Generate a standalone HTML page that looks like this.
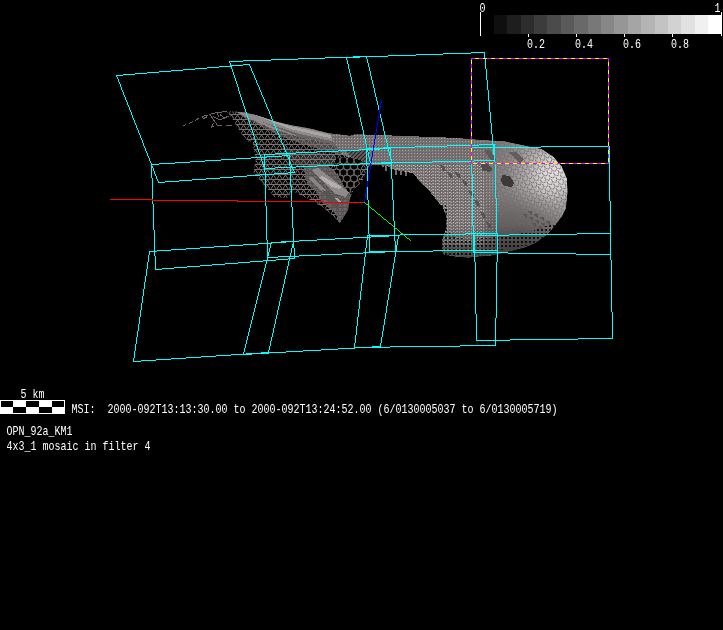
<!DOCTYPE html>
<html lang="en"><head><meta charset="utf-8"><title>MSI mosaic OPN_92a_KM1</title>
<style>html,body{margin:0;padding:0;background:#000;overflow:hidden}svg{display:block;will-change:transform}text{font-family:"Liberation Mono","DejaVu Sans Mono",monospace;fill:#fff;font-size:13px}</style>
</head><body>
<svg width="723" height="630" viewBox="0 0 723 630">
<rect x="0" y="0" width="723" height="630" fill="#000"/>
<g shape-rendering="crispEdges">
<rect x="494" y="15" width="13" height="19" fill="rgb(15,15,15)"/>
<rect x="507" y="15" width="14" height="19" fill="rgb(30,30,30)"/>
<rect x="521" y="15" width="13" height="19" fill="rgb(45,45,45)"/>
<rect x="534" y="15" width="13" height="19" fill="rgb(60,60,60)"/>
<rect x="547" y="15" width="14" height="19" fill="rgb(75,75,75)"/>
<rect x="561" y="15" width="13" height="19" fill="rgb(90,90,90)"/>
<rect x="574" y="15" width="14" height="19" fill="rgb(105,105,105)"/>
<rect x="588" y="15" width="13" height="19" fill="rgb(120,120,120)"/>
<rect x="601" y="15" width="13" height="19" fill="rgb(135,135,135)"/>
<rect x="614" y="15" width="14" height="19" fill="rgb(150,150,150)"/>
<rect x="628" y="15" width="13" height="19" fill="rgb(165,165,165)"/>
<rect x="641" y="15" width="14" height="19" fill="rgb(180,180,180)"/>
<rect x="655" y="15" width="13" height="19" fill="rgb(195,195,195)"/>
<rect x="668" y="15" width="13" height="19" fill="rgb(210,210,210)"/>
<rect x="681" y="15" width="14" height="19" fill="rgb(225,225,225)"/>
<rect x="695" y="15" width="13" height="19" fill="rgb(240,240,240)"/>
<rect x="708" y="15" width="13" height="19" fill="rgb(255,255,255)"/>
<rect x="480" y="12" width="1" height="24" fill="#fff"/>
<rect x="721" y="12" width="1" height="24" fill="#fff"/>
<rect x="528" y="34" width="1" height="3" fill="#fff"/>
<rect x="576" y="34" width="1" height="3" fill="#fff"/>
<rect x="624" y="34" width="1" height="3" fill="#fff"/>
<rect x="672" y="34" width="1" height="3" fill="#fff"/>
</g>
<text x="479.5" y="12" textLength="6" lengthAdjust="spacingAndGlyphs" xml:space="preserve">0</text>
<text x="714.5" y="12" textLength="6" lengthAdjust="spacingAndGlyphs" xml:space="preserve">1</text>
<text x="527.1" y="48" textLength="18" lengthAdjust="spacingAndGlyphs" xml:space="preserve">0.2</text>
<text x="575.1" y="48" textLength="18" lengthAdjust="spacingAndGlyphs" xml:space="preserve">0.4</text>
<text x="623.1" y="48" textLength="18" lengthAdjust="spacingAndGlyphs" xml:space="preserve">0.6</text>
<text x="671.1" y="48" textLength="18" lengthAdjust="spacingAndGlyphs" xml:space="preserve">0.8</text>
<defs>
<pattern id="mA" width="8" height="7" patternUnits="userSpaceOnUse"><path d="M1,5.5H6M3.5,5V2M3.5,2.5L1,0.5M3.5,2.5L6,0.5" stroke="#6e6565" stroke-width="1" fill="none"/></pattern>
<pattern id="mM" width="6" height="5" patternUnits="userSpaceOnUse"><path d="M0,4.5H6M0.5,4.5L3.5,0M3.5,0L6.5,4.5" stroke="#7a7171" stroke-width="1" fill="none"/></pattern>
<pattern id="mD" width="5" height="4" patternUnits="userSpaceOnUse"><path d="M0,3.5H5M0.5,4L2.5,0M2.5,0L4.5,4" stroke="#2a2727" stroke-width="1" fill="none"/></pattern>
<pattern id="sp" width="3" height="3" patternUnits="userSpaceOnUse"><rect x="0" y="0" width="1" height="1" fill="#d8d4d4"/><rect x="2" y="2" width="1" height="1" fill="#4a4646"/></pattern>
<pattern id="sp2" width="4" height="3" patternUnits="userSpaceOnUse"><rect x="1" y="0" width="1" height="1" fill="#eeeaea"/><rect x="3" y="1" width="1" height="1" fill="#e0dcdc"/></pattern>
<pattern id="mL" width="5" height="5" patternUnits="userSpaceOnUse" patternTransform="rotate(-28 548 172)"><path d="M2.5,0V2.5M2.5,2.5L0.5,4.5M2.5,2.5L4.5,4.5M0,4.5H1M4,4.5H5" stroke="#6e6666" stroke-width="1" fill="none"/></pattern>
<pattern id="hx" width="4" height="4" patternUnits="userSpaceOnUse"><path d="M-1,1L1,-1M0,4L4,0M3,5L5,3" stroke="#1e1c1c" stroke-width="1.2" fill="none"/></pattern>
<pattern id="hB" width="4" height="4" patternUnits="userSpaceOnUse"><rect x="1" y="1" width="2" height="2" fill="#000"/></pattern>
<radialGradient id="bulb" gradientUnits="userSpaceOnUse" cx="554" cy="174" r="72"><stop offset="0" stop-color="#e6e4e4"/><stop offset="0.2" stop-color="#d2cfcf"/><stop offset="0.42" stop-color="#aaa6a6"/><stop offset="0.68" stop-color="#8a8585"/><stop offset="1" stop-color="#777171"/></radialGradient>
<radialGradient id="lowsh" gradientUnits="userSpaceOnUse" cx="522" cy="236" r="48"><stop offset="0" stop-color="#3a3737" stop-opacity="0.5"/><stop offset="0.5" stop-color="#3a3737" stop-opacity="0.3"/><stop offset="1" stop-color="#3a3737" stop-opacity="0"/></radialGradient>
<linearGradient id="botfade" gradientUnits="userSpaceOnUse" x1="0" y1="225" x2="0" y2="258"><stop offset="0" stop-color="#000" stop-opacity="0"/><stop offset="0.45" stop-color="#000" stop-opacity="0.25"/><stop offset="1" stop-color="#000" stop-opacity="0.6"/></linearGradient>
<clipPath id="cB"><polygon points="365,134.5 379.8,134.9 404.7,136.1 429.6,136.8 454.9,137.9 479.8,139.9 504.7,141.5 525,145.8 541.7,149.2 553.3,156.7 561.7,166.7 566.7,178.3 567.5,191.7 565.7,208.5 562,216 557.5,222 552,229 545,236 535,243 525.6,247 514.6,250 507.5,251.5 491,255.5 476.5,256.6 468.7,257.6 455,256.5 443.6,254.7 441.6,248.9 442.4,239.5 445.5,230 446.7,218.3 443.3,208.3 436.7,200 430,191.7 420,181.7 413.3,173.3 405,171.7 395,170 386,165.5 374.8,165.2 372,165"/></clipPath>
<clipPath id="cH"><polygon points="336,158 348,157 360,159 361,172 358,184 354,189 350,194 344,186 338,174 334,165"/></clipPath>
<clipPath id="cL"><polygon points="226,111.5 229.7,111.2 244.7,112.4 257.1,115.4 274.6,121.2 289.5,124.9 309.4,128.6 329.3,133.6 350,136.1 354.9,134.4 365,134.5 372,165 369,168 366,172 362,182 354,189 350,198 348,210 340,223.2 334.3,217 324.3,208.3 309.4,199.6 292,190.9 287,198.3 274.6,197.1 263.4,184.6 253.4,172.2 255.9,158.5 252.2,141.1 249,142 241,133.6 232.3,118.7 228,113"/></clipPath>
</defs>
<g shape-rendering="crispEdges">
<path d="M183.5,125.5L186.5,124.5M189,123.5L193,121.5M195.500,120.5L199.500,117.5M202,117.500L205,115L207,115.500L206,117.500L203,118.500M209.500,114.500L217,112.500L227,111.500M210,114.500L217.500,125.500H222M226,125.500H231.500M211,127.500L213.500,123.500M210.500,126L214,126.500M213,116.500L219,119.500L225,118.500M220,114.500L224,117.500L229,116.500M217.500,112.500L218.500,117" stroke="#6e6565" stroke-width="1" fill="none"/>
<g clip-path="url(#cL)">
<rect x="253" y="105" width="125" height="125" fill="url(#mM)"/>
<rect x="220" y="105" width="34" height="45" fill="url(#mM)"/>
<polygon points="232,110 250,111 330,132 352,136 352,158 330,152 305,145 280,136 262,127 245,118" fill="#4c4747"/>
<polygon points="232,110 250,111 330,132 352,136 352,158 330,152 305,145 280,136 262,127 245,118" fill="url(#mM)"/>
<polygon points="234,110 250,111 274.6,120 289.5,124 309.4,128 329.3,133 352,136 352,148 319.4,141.5 294.5,135.5 269.6,127.8 244.7,116.5" fill="#8e8888"/>
<polygon points="250,113 290,126 330,135 352,139 352,141 330,138 290,129" fill="#aaa5a5"/>
<polygon points="262,122 300,134 340,143 352,145 352,147 340,146 300,137" fill="#6a6565"/>
<polygon points="284,148 335,155 341,166 303,167 292,162" fill="#8a8383" opacity="0.3"/>
<polygon points="303,166 327,164 338,176 347,187 353,199 349.4,210.6 345,215 339.4,223 336,215 329.4,208.3 321.7,201.7 316,191.7 307,182.8" fill="#6d6767"/>
<polygon points="303,166 327,164 338,176 347,187 353,199 349.4,210.6 345,215 339.4,223 336,215 329.4,208.3 321.7,201.7 316,191.7 307,182.8" fill="url(#mD)" opacity="0.35"/>
<polygon points="329,132 350,135 372,130 372,166 363,160 348,157 342,154 335,145" fill="#777070"/>
<polygon points="329,132 350,135 372,130 372,166 363,160 348,157 342,154 335,145" fill="url(#sp)" opacity="0.5"/>
<polygon points="311,170 318,168 349,192 346,197 336,194" fill="#8f8989"/>
<polygon points="319,177.5 322,176 341,186.5 340,189 332,187" fill="#b4afaf"/>
<polygon points="328,197 337,198 341,201 339,203 331,201" fill="#a8a3a3"/>
<polygon points="308,178 312,177 336,200 333,203" fill="#8a8484"/>
<polygon points="322,190 330,192 340,204 338,210 330,204" fill="#595454"/>
<polygon points="336,158 348,157 360,159 361,172 358,184 354,189 350,194 344,186 338,174 334,165" fill="#000"/>
<g fill="none" stroke="#756c6c" stroke-width="1" shape-rendering="geometricPrecision" clip-path="url(#cH)">
<circle cx="336.5" cy="160.5" r="3.6"/>
<circle cx="343.5" cy="160.5" r="3.6"/>
<circle cx="350.5" cy="160.5" r="3.6"/>
<circle cx="357.5" cy="160.5" r="3.6"/>
<circle cx="364.5" cy="160.5" r="3.6"/>
<circle cx="371.5" cy="160.5" r="3.6"/>
<circle cx="340" cy="166.5" r="3.6"/>
<circle cx="347" cy="166.5" r="3.6"/>
<circle cx="354" cy="166.5" r="3.6"/>
<circle cx="361" cy="166.5" r="3.6"/>
<circle cx="368" cy="166.5" r="3.6"/>
<circle cx="375" cy="166.5" r="3.6"/>
<circle cx="336.5" cy="172.5" r="3.6"/>
<circle cx="343.5" cy="172.5" r="3.6"/>
<circle cx="350.5" cy="172.5" r="3.6"/>
<circle cx="357.5" cy="172.5" r="3.6"/>
<circle cx="364.5" cy="172.5" r="3.6"/>
<circle cx="371.5" cy="172.5" r="3.6"/>
<circle cx="340" cy="178.5" r="3.6"/>
<circle cx="347" cy="178.5" r="3.6"/>
<circle cx="354" cy="178.5" r="3.6"/>
<circle cx="361" cy="178.5" r="3.6"/>
<circle cx="368" cy="178.5" r="3.6"/>
<circle cx="375" cy="178.5" r="3.6"/>
<circle cx="336.5" cy="184.5" r="3.6"/>
<circle cx="343.5" cy="184.5" r="3.6"/>
<circle cx="350.5" cy="184.5" r="3.6"/>
<circle cx="357.5" cy="184.5" r="3.6"/>
<circle cx="364.5" cy="184.5" r="3.6"/>
<circle cx="371.5" cy="184.5" r="3.6"/>
<circle cx="340" cy="190.5" r="3.6"/>
<circle cx="347" cy="190.5" r="3.6"/>
<circle cx="354" cy="190.5" r="3.6"/>
<circle cx="361" cy="190.5" r="3.6"/>
<circle cx="368" cy="190.5" r="3.6"/>
<circle cx="375" cy="190.5" r="3.6"/>
</g>
</g>
<polygon points="346,151 396,149.5 398,166 386,165.5 372,165 362,161 352,157.5" fill="#6a6464"/>
<polygon points="346,151 396,149.5 398,166 386,165.5 372,165 362,161 352,157.5" fill="url(#hx)" shape-rendering="geometricPrecision"/>
<path d="M386,165V171M390.5,165V169M396,168V175M401,170V174.500M406,171V176M383,165V167" stroke="#756c6c" stroke-width="2" fill="none"/>
<polygon points="365,134.5 379.8,134.9 404.7,136.1 429.6,136.8 454.9,137.9 479.8,139.9 504.7,141.5 525,145.8 541.7,149.2 553.3,156.7 561.7,166.7 566.7,178.3 567.5,191.7 565.7,208.5 562,216 557.5,222 552,229 545,236 535,243 525.6,247 514.6,250 507.5,251.5 491,255.5 476.5,256.6 468.7,257.6 455,256.5 443.6,254.7 441.6,248.9 442.4,239.5 445.5,230 446.7,218.3 443.3,208.3 436.7,200 430,191.7 420,181.7 413.3,173.3 405,171.7 395,170 386,165.5 374.8,165.2 372,165" fill="#767070"/>
<g clip-path="url(#cB)">
<rect x="455" y="130" width="120" height="130" fill="url(#bulb)"/>
<rect x="470" y="185" width="105" height="100" fill="url(#lowsh)"/>
<polygon points="360,130 500,130 492,170 500,200 496,230 500,260 360,260" fill="url(#sp)" opacity="0.45"/>
<polygon points="486,138 575,138 575,245 520,252 505,232 490,205 494,180 484,160" fill="url(#mL)" opacity="0.85"/>
<rect x="395" y="165" width="90" height="80" fill="url(#sp2)" opacity="0.55"/>
<polygon points="502,175 510,176 514,183 512,187 504,186 501,181" fill="#3c3a3a"/>
<polygon points="480,163 488,164 492,169 490,172 483,171" fill="#4e4b4b"/>
<polygon points="484,150 490,150 496,160 492,162" fill="#5d5959"/>
<polygon points="508,152 516,152 524,160 520,163" fill="#625e5e"/>
<polygon points="455,172 459,173 461,178 458,178" fill="#575353"/>
<polygon points="462,180 466,181 468,186 465,186" fill="#575353"/>
<polygon points="468,190 472,191 474,196 471,196" fill="#575353"/>
<polygon points="474,200 478,201 480,206 477,206" fill="#575353"/>
<polygon points="480,212 484,213 486,218 483,218" fill="#575353"/>
<polygon points="486,222 490,223 492,228 489,228" fill="#575353"/>
<polygon points="440,165 444,166 446,171 443,171" fill="#575353"/>
<polygon points="447,172 451,173 453,178 450,178" fill="#575353"/>
<polygon points="522,214 527,214 527,218" fill="#5a5656"/>
<polygon points="528,217 533,217 533,221" fill="#5a5656"/>
<polygon points="534,220 539,220 539,224" fill="#5a5656"/>
<polygon points="540,223 545,223 545,227" fill="#5a5656"/>
<polygon points="527,211 532,211 532,215" fill="#5a5656"/>
<polygon points="533,214 538,214 538,218" fill="#5a5656"/>
<polygon points="539,217 544,217 544,221" fill="#5a5656"/>
<polygon points="545,221 550,221 550,225" fill="#5a5656"/>
<polygon points="531,223 536,223 536,227" fill="#5a5656"/>
<polygon points="537,226 542,226 542,230" fill="#5a5656"/>
<rect x="430" y="220" width="140" height="40" fill="url(#botfade)" opacity="0.7"/>
<polygon points="440,236 470,239 500,237 530,232 556,222 560,240 440,260" fill="url(#hB)" opacity="0.8"/>
<polygon points="440,205 446,205 450,236 440,240" fill="url(#hB)" opacity="0.8"/>
</g>
</g>
<path shape-rendering="crispEdges" fill="#00ffff" stroke="none" d="M175,162h15v1h-15zM289,162h2v1h-2zM381,162h51v1h-51zM267,254h2v1h-2zM321,254h21v1h-21zM576,254h35v1h-35zM264,154h11v1h-11zM389,154h2v1h-2zM493,154h2v1h-2zM250,261h13v1h-13zM190,161h15v1h-15zM432,161h42v1h-42zM383,147h32v1h-32zM471,147h70v1h-70zM274,173h14v1h-14zM275,153h21v1h-21zM389,153h2v1h-2zM493,153h2v1h-2zM415,146h32v1h-32zM493,146h2v1h-2zM541,146h69v1h-69zM151,166h2v1h-2zM263,166h2v1h-2zM290,166h2v1h-2zM296,166h21v1h-21zM288,258h7v1h-7zM366,148h25v1h-25zM493,148h2v1h-2zM212,264h13v1h-13zM317,151h21v1h-21zM366,151h2v1h-2zM493,151h2v1h-2zM479,144h16v1h-16zM151,164h8v1h-8zM263,164h2v1h-2zM339,164h21v1h-21zM359,149h21v1h-21zM493,149h2v1h-2zM298,58h27v1h-27zM354,347h36v1h-36zM400,234h65v1h-65zM509,234h68v1h-68zM416,54h27v1h-27zM578,338h35v1h-35zM476,340h34v1h-34zM219,66h13v1h-13zM460,345h36v1h-36zM231,354h21v1h-21zM367,235h33v1h-33zM473,235h36v1h-36zM281,241h18v1h-18zM473,241h2v1h-2zM151,167h2v1h-2zM275,167h21v1h-21zM243,60h28v1h-28zM247,175h13v1h-13zM207,67h12v1h-12zM353,56h35v1h-35zM206,178h14v1h-14zM317,239h18v1h-18zM473,239h2v1h-2zM165,181h14v1h-14zM303,350h18v1h-18zM372,346h9v1h-9zM390,346h70v1h-70zM233,176h14v1h-14zM325,57h35v1h-35zM271,59h27v1h-27zM338,348h17v1h-17zM159,71h12v1h-12zM260,174h14v1h-14zM192,179h14v1h-14zM216,355h15v1h-15zM171,358h15v1h-15zM471,52h14v1h-14zM246,353h23v1h-23zM183,69h12v1h-12zM171,70h12v1h-12zM171,249h15v1h-15zM395,249h2v1h-2zM473,249h2v1h-2zM465,233h33v1h-33zM577,233h34v1h-34zM147,72h12v1h-12zM214,246h15v1h-15zM292,246h2v1h-2zM395,246h2v1h-2zM473,246h2v1h-2zM278,256h21v1h-21zM179,180h13v1h-13zM371,236h18v1h-18zM473,236h2v1h-2zM157,250h14v1h-14zM395,250h2v1h-2zM433,250h65v1h-65zM267,257h11v1h-11zM135,73h12v1h-12zM267,255h2v1h-2zM299,255h22v1h-22zM353,237h18v1h-18zM473,237h2v1h-2zM335,238h18v1h-18zM473,238h2v1h-2zM162,268h12v1h-12zM263,260h13v1h-13zM267,252h2v1h-2zM363,252h22v1h-22zM473,252h35v1h-35zM116,75h7v1h-7zM447,145h32v1h-32zM493,145h2v1h-2zM338,150h21v1h-21zM366,150h2v1h-2zM493,150h2v1h-2zM267,156h15v1h-15zM296,152h21v1h-21zM389,152h2v1h-2zM493,152h2v1h-2zM225,263h13v1h-13zM187,266h13v1h-13zM159,163h16v1h-16zM289,163h2v1h-2zM360,163h32v1h-32zM236,158h15v1h-15zM288,158h2v1h-2zM205,160h16v1h-16zM474,160h21v1h-21zM155,269h7v1h-7zM221,159h15v1h-15zM390,159h2v1h-2zM510,339h68v1h-68zM443,53h28v1h-28zM264,168h11v1h-11zM282,155h8v1h-8zM389,155h2v1h-2zM261,352h25v1h-25zM388,55h28v1h-28zM220,177h13v1h-13zM321,349h17v1h-17zM263,165h2v1h-2zM317,165h22v1h-22zM156,359h15v1h-15zM186,357h15v1h-15zM243,244h15v1h-15zM292,244h2v1h-2zM473,244h2v1h-2zM271,242h15v1h-15zM473,242h2v1h-2zM186,248h14v1h-14zM395,248h2v1h-2zM473,248h2v1h-2zM123,74h12v1h-12zM149,251h8v1h-8zM369,251h64v1h-64zM473,251h2v1h-2zM299,240h18v1h-18zM473,240h2v1h-2zM276,259h12v1h-12zM200,265h12v1h-12zM238,262h12v1h-12zM267,253h2v1h-2zM342,253h21v1h-21zM508,253h68v1h-68zM251,157h16v1h-16zM288,157h2v1h-2zM286,351h17v1h-17zM230,65h13v1h-13zM258,243h14v1h-14zM473,243h2v1h-2zM201,356h15v1h-15zM141,360h15v1h-15zM195,68h12v1h-12zM133,361h8v1h-8zM229,245h14v1h-14zM292,245h2v1h-2zM395,245h2v1h-2zM473,245h2v1h-2zM200,247h14v1h-14zM292,247h2v1h-2zM395,247h2v1h-2zM473,247h2v1h-2zM174,267h13v1h-13zM243,64h7v1h-7zM229,61h14v1h-14zM158,182h7v1h-7zM288,172h7v1h-7zM367,59h1v4h-1zM367,166h1v34h-1zM367,236h1v1h-1zM367,238h1v2h-1zM487,80h1v10h-1zM611,260h1v52h-1zM276,128h1v3h-1zM276,315h1v4h-1zM248,118h1v3h-1zM248,332h1v4h-1zM382,122h1v4h-1zM382,331h1v6h-1zM151,163h1v1h-1zM151,165h1v1h-1zM151,168h1v10h-1zM393,200h1v21h-1zM393,263h1v6h-1zM366,57h1v2h-1zM366,144h1v4h-1zM366,152h1v11h-1zM366,164h1v2h-1zM366,240h1v8h-1zM354,91h1v4h-1zM354,343h1v4h-1zM278,133h1v2h-1zM278,306h1v4h-1zM364,135h1v4h-1zM364,257h1v9h-1zM497,234h1v1h-1zM497,236h1v14h-1zM497,251h1v1h-1zM497,253h1v9h-1zM288,261h1v5h-1zM153,168h1v3h-1zM153,204h1v26h-1zM496,198h1v35h-1zM496,262h1v56h-1zM291,164h1v2h-1zM291,186h1v21h-1zM291,248h1v5h-1zM391,160h1v2h-1zM391,164h1v15h-1zM391,276h1v6h-1zM269,111h1v3h-1zM269,248h1v4h-1zM269,346h1v4h-1zM370,71h1v5h-1zM370,161h1v2h-1zM495,162h1v36h-1zM495,318h1v22h-1zM495,341h1v4h-1zM119,82h1v2h-1zM472,174h1v52h-1zM383,126h1v5h-1zM383,325h1v6h-1zM293,169h1v2h-1zM293,228h1v13h-1zM293,242h1v2h-1zM385,135h1v4h-1zM385,313h1v6h-1zM143,143h1v3h-1zM143,289h1v7h-1zM147,153h1v3h-1zM147,262h1v7h-1zM359,113h1v4h-1zM359,300h1v9h-1zM271,116h1v3h-1zM271,337h1v4h-1zM476,314h1v26h-1zM129,107h1v3h-1zM609,147h1v54h-1zM360,117h1v5h-1zM360,291h1v9h-1zM361,122h1v4h-1zM361,283h1v8h-1zM260,90h1v2h-1zM260,155h1v2h-1zM260,284h1v4h-1zM266,104h1v3h-1zM266,206h1v34h-1zM266,261h1v3h-1zM252,71h1v2h-1zM252,130h1v3h-1zM252,316h1v4h-1zM379,110h1v4h-1zM290,168h1v4h-1zM290,173h1v13h-1zM290,253h1v3h-1zM136,125h1v3h-1zM136,337h1v7h-1zM275,126h1v2h-1zM275,319h1v5h-1zM246,112h1v3h-1zM246,340h1v4h-1zM390,149h1v3h-1zM390,156h1v3h-1zM390,282h1v6h-1zM381,118h1v4h-1zM381,337h1v6h-1zM155,174h1v2h-1zM155,256h1v13h-1zM259,87h1v3h-1zM259,152h1v3h-1zM259,288h1v4h-1zM232,69h1v3h-1zM148,156h1v2h-1zM148,255h1v7h-1zM138,130h1v3h-1zM138,324h1v7h-1zM265,102h1v2h-1zM265,172h1v2h-1zM265,175h1v31h-1zM265,264h1v4h-1zM142,140h1v3h-1zM142,296h1v7h-1zM363,130h1v5h-1zM363,266h1v8h-1zM279,135h1v3h-1zM279,301h1v5h-1zM612,312h1v26h-1zM610,201h1v32h-1zM610,234h1v20h-1zM610,255h1v5h-1zM373,84h1v4h-1zM272,119h1v2h-1zM272,333h1v4h-1zM392,179h1v21h-1zM392,269h1v7h-1zM474,253h1v9h-1zM152,178h1v26h-1zM386,139h1v4h-1zM386,306h1v7h-1zM350,73h1v4h-1zM362,126h1v4h-1zM362,274h1v9h-1zM292,168h1v1h-1zM292,207h1v21h-1zM132,115h1v3h-1zM398,236h1v3h-1zM264,99h1v3h-1zM264,155h1v2h-1zM264,158h1v6h-1zM264,167h1v1h-1zM264,169h1v3h-1zM264,268h1v4h-1zM282,143h1v2h-1zM282,288h1v5h-1zM357,104h1v4h-1zM357,317h1v9h-1zM492,134h1v10h-1zM475,262h1v52h-1zM139,133h1v2h-1zM139,317h1v7h-1zM380,114h1v4h-1zM380,343h1v3h-1zM286,152h1v1h-1zM286,154h1v1h-1zM286,270h1v5h-1zM368,63h1v4h-1zM368,152h1v5h-1zM368,200h1v34h-1zM489,101h1v11h-1zM346,58h1v2h-1zM154,171h1v3h-1zM154,230h1v21h-1zM154,252h1v4h-1zM349,69h1v4h-1zM494,155h1v5h-1zM494,161h1v1h-1zM486,69h1v11h-1zM149,158h1v3h-1zM149,252h1v3h-1zM146,151h1v2h-1zM146,269h1v7h-1zM141,138h1v2h-1zM141,303h1v7h-1zM388,149h1v3h-1zM388,294h1v6h-1zM294,171h1v1h-1zM294,248h1v8h-1zM294,257h1v1h-1zM241,97h1v3h-1zM242,100h1v3h-1zM156,176h1v3h-1zM397,239h1v6h-1zM394,221h1v14h-1zM394,236h1v5h-1zM394,257h1v6h-1zM245,109h1v3h-1zM245,344h1v4h-1zM262,95h1v2h-1zM262,161h1v3h-1zM262,276h1v4h-1zM257,83h1v2h-1zM257,146h1v3h-1zM257,296h1v4h-1zM247,115h1v3h-1zM247,336h1v4h-1zM355,95h1v4h-1zM355,335h1v8h-1zM485,58h1v11h-1zM267,107h1v2h-1zM267,240h1v3h-1zM267,244h1v8h-1zM267,256h1v1h-1zM267,258h1v2h-1zM371,76h1v4h-1zM231,67h1v2h-1zM471,148h1v13h-1zM471,162h1v12h-1zM356,99h1v5h-1zM356,326h1v9h-1zM273,121h1v2h-1zM273,328h1v5h-1zM374,88h1v5h-1zM289,156h1v1h-1zM289,159h1v3h-1zM289,164h1v2h-1zM289,257h1v1h-1zM289,259h1v2h-1zM127,102h1v3h-1zM277,131h1v2h-1zM277,310h1v5h-1zM134,120h1v3h-1zM134,351h1v7h-1zM145,148h1v3h-1zM145,276h1v6h-1zM131,112h1v3h-1zM387,143h1v4h-1zM387,300h1v6h-1zM135,123h1v2h-1zM135,344h1v7h-1zM491,123h1v11h-1zM280,138h1v2h-1zM280,297h1v4h-1zM488,90h1v11h-1zM144,146h1v2h-1zM144,282h1v7h-1zM251,68h1v3h-1zM251,127h1v3h-1zM251,320h1v4h-1zM234,75h1v3h-1zM358,108h1v5h-1zM358,309h1v8h-1zM237,84h1v3h-1zM284,147h1v3h-1zM284,279h1v5h-1zM369,67h1v4h-1zM369,157h1v4h-1zM369,234h1v1h-1zM369,236h1v1h-1zM369,238h1v13h-1zM490,112h1v11h-1zM240,94h1v3h-1zM377,101h1v4h-1zM274,123h1v3h-1zM274,324h1v4h-1zM365,139h1v5h-1zM365,248h1v4h-1zM365,253h1v4h-1zM126,100h1v2h-1zM255,78h1v2h-1zM255,139h1v4h-1zM255,304h1v4h-1zM243,103h1v3h-1zM243,352h1v2h-1zM261,92h1v3h-1zM261,158h1v3h-1zM261,280h1v4h-1zM229,62h1v1h-1zM133,118h1v2h-1zM133,358h1v3h-1zM233,72h1v3h-1zM270,114h1v2h-1zM270,244h1v4h-1zM270,341h1v5h-1zM353,86h1v5h-1zM121,87h1v3h-1zM389,288h1v6h-1zM256,80h1v3h-1zM256,143h1v3h-1zM256,300h1v4h-1zM378,105h1v5h-1zM254,75h1v3h-1zM254,136h1v3h-1zM254,308h1v4h-1zM281,140h1v3h-1zM281,293h1v4h-1zM263,97h1v2h-1zM263,272h1v4h-1zM268,109h1v2h-1zM268,350h1v2h-1zM285,150h1v2h-1zM285,275h1v4h-1zM158,181h1v1h-1zM351,77h1v5h-1zM484,53h1v5h-1zM137,128h1v2h-1zM137,331h1v6h-1zM347,60h1v4h-1zM253,73h1v2h-1zM253,133h1v3h-1zM253,312h1v4h-1zM150,161h1v2h-1zM473,226h1v7h-1zM473,234h1v1h-1zM372,80h1v4h-1zM384,131h1v4h-1zM384,319h1v6h-1zM128,105h1v2h-1zM250,66h1v2h-1zM250,124h1v3h-1zM250,324h1v4h-1zM238,87h1v4h-1zM375,93h1v4h-1zM140,135h1v3h-1zM140,310h1v7h-1zM348,64h1v5h-1zM258,85h1v2h-1zM258,149h1v3h-1zM258,292h1v4h-1zM249,65h1v1h-1zM249,121h1v3h-1zM249,328h1v4h-1zM244,106h1v3h-1zM244,348h1v4h-1zM230,63h1v2h-1zM395,241h1v4h-1zM395,252h1v5h-1zM287,156h1v1h-1zM287,266h1v4h-1zM239,91h1v3h-1zM283,145h1v2h-1zM283,284h1v4h-1zM157,179h1v2h-1zM123,92h1v3h-1zM130,110h1v2h-1zM236,81h1v3h-1zM376,97h1v4h-1zM118,79h1v3h-1zM122,90h1v2h-1zM235,78h1v3h-1zM352,82h1v4h-1zM116,76h1v1h-1zM117,77h1v2h-1zM125,97h1v3h-1zM120,84h1v3h-1zM124,95h1v2h-1z"/>
<g shape-rendering="crispEdges" fill="none" stroke-width="1">
<rect x="471.5" y="58.5" width="137" height="105" stroke="#ffff00"/>
<path d="M471,58.5H609M608.5,58V164M609,163.5H471M471.5,164V58" stroke="#ff00ff" stroke-dasharray="4 4"/>
</g>
<g shape-rendering="crispEdges" fill="none" stroke-width="1">
<path d="M110,199.5H152.5M152,200.5H237.5M237,201.5H322.5M322,202.5H364.5" stroke="#ff0000"/>
<path d="M378,115h1v6h-1zM377,121h1v6h-1zM376,127h1v6h-1zM366,187h1v6h-1zM375,133h1v6h-1zM364,199h1v3h-1zM371,157h1v6h-1zM374,139h1v6h-1zM372,151h1v6h-1zM369,169h1v6h-1zM367,181h1v6h-1zM379,109h1v6h-1zM365,193h1v6h-1zM381,100h1v3h-1zM373,145h1v6h-1zM380,103h1v6h-1zM370,163h1v6h-1zM368,175h1v6h-1z" fill="#0000ff" stroke="none"/>
<path d="M384,219h2v1h-2zM395,228h2v1h-2zM401,233h2v1h-2zM366,204h2v1h-2zM372,209h2v1h-2zM407,238h2v1h-2zM378,214h2v1h-2zM389,223h2v1h-2zM382,217h1v1h-1zM400,232h1v1h-1zM371,208h1v1h-1zM364,202h1v1h-1zM393,226h1v1h-1zM375,211h1v1h-1zM386,220h1v1h-1zM394,227h1v1h-1zM404,235h1v1h-1zM365,203h1v1h-1zM383,218h1v1h-1zM368,205h1v1h-1zM387,221h1v1h-1zM397,229h1v1h-1zM405,236h1v1h-1zM406,237h1v1h-1zM376,212h1v1h-1zM398,230h1v1h-1zM369,206h1v1h-1zM377,213h1v1h-1zM380,215h1v1h-1zM391,224h1v1h-1zM399,231h1v1h-1zM409,239h1v1h-1zM410,240h1v1h-1zM370,207h1v1h-1zM388,222h1v1h-1zM381,216h1v1h-1zM392,225h1v1h-1zM403,234h1v1h-1zM374,210h1v1h-1z" fill="#00ff00" stroke="none"/>
</g>
<g shape-rendering="crispEdges">
<rect x="0" y="400" width="65" height="14" fill="#fff"/>
<rect x="1" y="401" width="12" height="6" fill="#000"/>
<rect x="13" y="407" width="13" height="6" fill="#000"/>
<rect x="26" y="401" width="13" height="6" fill="#000"/>
<rect x="39" y="407" width="13" height="6" fill="#000"/>
<rect x="52" y="401" width="12" height="6" fill="#000"/>
</g>
<text x="20.6" y="398" textLength="24" lengthAdjust="spacingAndGlyphs" xml:space="preserve">5 km</text>
<text x="71.6" y="412.7" textLength="486" lengthAdjust="spacingAndGlyphs" xml:space="preserve">MSI:  2000-092T13:13:30.00 to 2000-092T13:24:52.00 (6/0130005037 to 6/0130005719)</text>
<text x="6.6" y="435" textLength="66" lengthAdjust="spacingAndGlyphs" xml:space="preserve">OPN_92a_KM1</text>
<text x="6.6" y="450" textLength="144" lengthAdjust="spacingAndGlyphs" xml:space="preserve">4x3_1 mosaic in filter 4</text>
</svg></body></html>
